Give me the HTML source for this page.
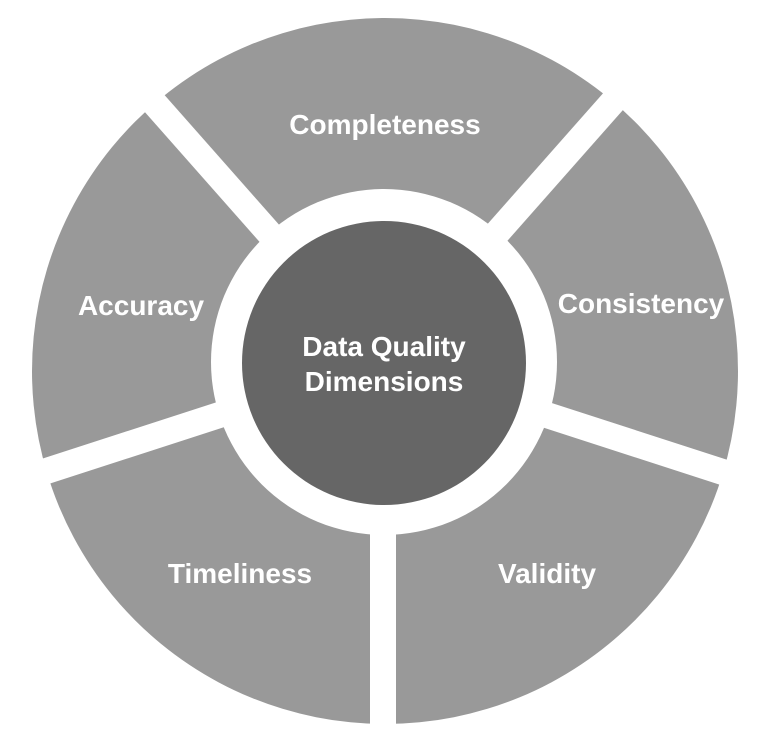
<!DOCTYPE html>
<html><head><style>
html,body{margin:0;padding:0;background:#fff;}
svg{display:block;}
text{font-family:"Liberation Sans",Arial,sans-serif;font-weight:bold;fill:#fff;font-size:28px;text-anchor:middle;}
</style></head><body>
<svg width="783" height="745" viewBox="0 0 783 745" xmlns="http://www.w3.org/2000/svg">
<circle cx="385" cy="371" r="353" fill="#999999"/>
<g stroke="#fff" stroke-width="26">
<line x1="383" y1="362" x2="383" y2="760"/>
<line x1="383" y1="362" x2="772" y2="488"/>
<line x1="383" y1="362" x2="-6" y2="488"/>
<line x1="383" y1="362" x2="118" y2="62"/>
<line x1="383" y1="362" x2="648" y2="62"/>
</g>
<circle cx="384" cy="362" r="173" fill="#fff"/>
<circle cx="384" cy="363" r="142" fill="#666666"/>
<text x="385" y="134">Completeness</text>
<text x="641" y="313">Consistency</text>
<text x="141" y="315">Accuracy</text>
<text x="240" y="583">Timeliness</text>
<text x="547" y="583">Validity</text>
<text x="384" y="356">Data Quality</text>
<text x="384" y="391">Dimensions</text>
</svg>
</body></html>
